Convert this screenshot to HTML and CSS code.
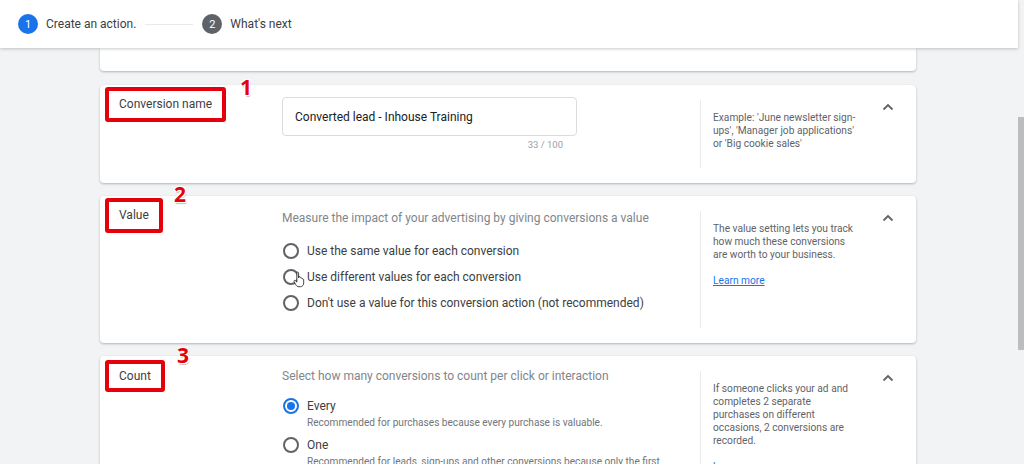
FILE: index.html
```html
<!DOCTYPE html>
<html>
<head>
<meta charset="utf-8">
<link rel="stylesheet" href="styles.css">
</head>
<body>
<div class="app">
  <div class="main">
    <header class="stepper">
      <div class="step">
        <span class="step-num active">1</span>
        <span class="step-text">Create an action.</span>
      </div>
      <span class="step-line"></span>
      <div class="step">
        <span class="step-num">2</span>
        <span class="step-text">What's next</span>
      </div>
    </header>

    <div class="content">
      <div class="card card-prev"></div>

      <section class="card card-name">
        <div class="col-label">
          <span class="label-box">Conversion name</span>
          <span class="marker m1">1</span>
        </div>
        <div class="col-main">
          <div class="text-input">Converted lead - Inhouse Training</div>
          <div class="counter">33 / 100</div>
        </div>
        <div class="col-help">
          <p class="help">Example: 'June newsletter sign-<br>ups', 'Manager job applications'<br>or 'Big cookie sales'</p>
        </div>
        <div class="col-toggle">
          <svg class="chevron" viewBox="0 0 16 16" width="16" height="16"><path d="M3.5 10.5 L8 6 L12.5 10.5" fill="none" stroke="#5f6368" stroke-width="1.8"/></svg>
        </div>
      </section>

      <section class="card card-value">
        <div class="col-label">
          <span class="label-box">Value</span>
          <span class="marker m2">2</span>
        </div>
        <div class="col-main">
          <div class="desc">Measure the impact of your advertising by giving conversions a value</div>
          <div class="radio-list">
            <div class="radio-row"><span class="radio"></span><span class="radio-label">Use the same value for each conversion</span></div>
            <div class="radio-row cursor-row"><span class="radio"></span><span class="radio-label">Use different values for each conversion</span>
              <svg class="hand" viewBox="0 0 14 20" width="12" height="17"><path d="M4.5 1.5 C5.5 1 6.5 1.5 6.5 2.5 L6.5 8 L7 6.8 C8 6.3 8.8 6.8 8.8 7.8 L9 8.2 C10 7.8 10.8 8.4 10.8 9.3 C11.8 9 12.5 9.6 12.5 10.6 L12.5 14 C12.5 16.5 11 18.5 8.5 18.5 L7 18.5 C5 18.5 4 17.5 3 15.8 L1.3 12.5 C0.9 11.6 1.5 10.8 2.4 11 L4.5 13 Z" fill="#fff" stroke="#222" stroke-width="1" stroke-linejoin="round"/></svg>
            </div>
            <div class="radio-row"><span class="radio"></span><span class="radio-label">Don't use a value for this conversion action (not recommended)</span></div>
          </div>
        </div>
        <div class="col-help">
          <p class="help">The value setting lets you track<br>how much these conversions<br>are worth to your business.</p>
          <p class="help"><a class="link" href="#">Learn more</a></p>
        </div>
        <div class="col-toggle">
          <svg class="chevron" viewBox="0 0 16 16" width="16" height="16"><path d="M3.5 10.5 L8 6 L12.5 10.5" fill="none" stroke="#5f6368" stroke-width="1.8"/></svg>
        </div>
      </section>

      <section class="card card-count">
        <div class="col-label">
          <span class="label-box">Count</span>
          <span class="marker m3">3</span>
        </div>
        <div class="col-main">
          <div class="desc">Select how many conversions to count per click or interaction</div>
          <div class="option-list">
            <div class="option">
              <span class="radio checked"></span>
              <div class="option-body">
                <div class="radio-label">Every</div>
                <div class="sub">Recommended for purchases because every purchase is valuable.</div>
              </div>
            </div>
            <div class="option">
              <span class="radio"></span>
              <div class="option-body">
                <div class="radio-label">One</div>
                <div class="sub">Recommended for leads, sign-ups and other conversions because only the first</div>
              </div>
            </div>
          </div>
        </div>
        <div class="col-help">
          <p class="help">If someone clicks your ad and<br>completes 2 separate<br>purchases on different<br>occasions, 2 conversions are<br>recorded.</p>
          <p class="help"><a class="link" href="#">Learn more</a></p>
        </div>
        <div class="col-toggle">
          <svg class="chevron" viewBox="0 0 16 16" width="16" height="16"><path d="M3.5 10.5 L8 6 L12.5 10.5" fill="none" stroke="#5f6368" stroke-width="1.8"/></svg>
        </div>
      </section>
    </div>
  </div>
  <div class="scrollbar"><div class="thumb"></div></div>
</div>
</body>
</html>
```

FILE: styles.css
```css
* { box-sizing: border-box; }

html, body {
  margin: 0;
  padding: 0;
  height: 464px;
  overflow: hidden;
  background: #f1f3f4;
  font-family: Roboto, "Liberation Sans", Arial, sans-serif;
  color: #3c4043;
}

.app {
  display: flex;
  height: 464px;
}

.main {
  width: 1018px;
  display: flex;
  flex-direction: column;
  position: relative;
}

.stepper {
  height: 48px;
  background: #fff;
  display: flex;
  align-items: center;
  padding-left: 18px;
  box-shadow: 0 1px 3px rgba(60, 64, 67, 0.28);
  position: relative;
  z-index: 2;
  flex: none;
}

.step {
  display: flex;
  align-items: center;
  gap: 8px;
}

.step-num {
  width: 20px;
  height: 20px;
  border-radius: 50%;
  background: #5f6368;
  color: #fff;
  font-size: 11px;
  display: flex;
  align-items: center;
  justify-content: center;
}

.step-num.active { background: #1a73e8; }

.step-text {
  font-size: 12px;
  color: #3c4043;
}

.step-line {
  width: 48px;
  height: 1px;
  background: #e8eaed;
  margin: 0 9px 0 9px;
}

.content {
  display: flex;
  flex-direction: column;
  gap: 13px;
  margin-left: 100px;
  width: 816px;
}

.card {
  background: #fff;
  border-radius: 4px;
  box-shadow: 0 1px 2px rgba(60, 64, 67, 0.25), 0 1px 3px rgba(60, 64, 67, 0.1);
  display: grid;
  grid-template-columns: 182px 418px 172px 44px;
  position: relative;
  flex: none;
}

.card-prev {
  height: 23px;
  border-radius: 0 0 4px 4px;
  margin-bottom: 1px;
}

.card-name { height: 98px; }
.card-value { height: 147px; }
.card-count { height: 200px; }

.col-label {
  padding: 2px 0 0 5px;
}

.card-count .col-label { padding-top: 4px; }

.label-box {
  display: inline-block;
  border: 4px solid #e5000b;
  border-radius: 3px;
  padding: 0 10px;
  height: 35px;
  line-height: 27px;
  font-size: 12px;
  color: #3c4043;
  background: #fff;
}

.card-count .label-box { height: 32px; line-height: 24px; }

.marker {
  position: absolute;
  font-family: "Open Sans", "DejaVu Sans", sans-serif;
  font-weight: 700;
  font-size: 21px;
  line-height: 1;
  color: #e5000b;
  text-shadow: 1px 1px 0 #fff, -1px 1px 0 #fff, 1px -1px 0 #fff, -1px -1px 0 #fff, 1px 2px 1px rgba(0,0,0,0.25);
}

.m1 { left: 140px; top: -8px; }
.m2 { left: 74px; top: -12px; }
.m3 { left: 77px; top: -11px; }

.col-main {
  padding-top: 12px;
}

.text-input {
  width: 295px;
  height: 39px;
  border: 1px solid #dadce0;
  border-radius: 4px;
  padding: 0 12px;
  font-size: 12px;
  line-height: 38px;
  color: #202124;
}

.counter {
  width: 295px;
  padding-right: 14px;
  text-align: right;
  font-size: 9.5px;
  color: #9aa0a6;
  margin-top: 3px;
}

.desc {
  font-size: 12px;
  line-height: 20px;
  color: #80868b;
}

.card-count .col-main { padding-top: 10px; }

.radio-list {
  margin-top: 10px;
  display: flex;
  flex-direction: column;
}

.radio-row {
  height: 26px;
  display: flex;
  align-items: center;
  position: relative;
}

.radio {
  width: 16px;
  height: 16px;
  border: 2px solid #5f6368;
  border-radius: 50%;
  margin: 0 8px 0 1px;
  flex: none;
  position: relative;
}

.radio.checked { border-color: #1a73e8; }

.radio.checked::after {
  content: "";
  position: absolute;
  left: 2px;
  top: 2px;
  width: 8px;
  height: 8px;
  border-radius: 50%;
  background: #1a73e8;
}

.radio-label {
  font-size: 12px;
  color: #3c4043;
  line-height: 20px;
}

.hand {
  position: absolute;
  left: 11px;
  top: 7px;
}

.option-list {
  margin-top: 10px;
  display: flex;
  flex-direction: column;
  gap: 5px;
}

.option {
  display: flex;
  align-items: flex-start;
}

.option .radio { margin-top: 2px; }

.sub {
  font-size: 10.1px;
  line-height: 14px;
  color: #70757a;
  white-space: nowrap;
}

.col-help {
  border-left: 1px solid #e8eaed;
  margin: 15px 0;
  padding: 11px 0 0 12px;
}

.help {
  margin: 0 0 13px;
  font-size: 10.2px;
  line-height: 13px;
  color: #5f6368;
  white-space: nowrap;
}

.link {
  color: #1a73e8;
  text-decoration: underline;
}

.col-toggle {
  padding: 14px 0 0 8px;
}

.chevron { display: block; }

.scrollbar {
  width: 6px;
  background: #f1f3f4;
  padding-top: 117px;
}

.thumb {
  width: 6px;
  height: 233px;
  background: #bdbdbd;
}
```
